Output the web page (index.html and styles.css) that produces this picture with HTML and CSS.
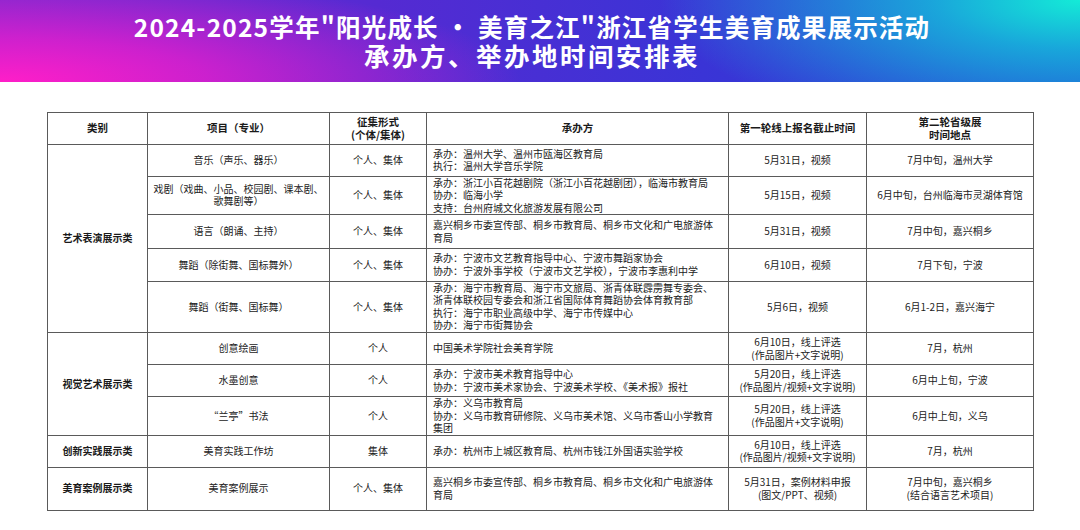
FILE: index.html
```html
<!DOCTYPE html>
<html lang="zh-CN">
<head>
<meta charset="utf-8">
<title>承办方、举办地时间安排表</title>
<link rel="stylesheet" href="styles.css">
</head>
<body>
<header class="banner">
  <h1 class="title"><span class="line line-a">2024-2025学年"阳光成长 · 美育之江"浙江省学生美育成果展示活动</span><span class="line line-b">承办方、举办地时间安排表</span></h1>
</header>
<main class="wrap">
<table class="plan">
  <colgroup>
    <col class="c1"><col class="c2"><col class="c3"><col class="c4"><col class="c5"><col class="c6">
  </colgroup>
  <thead>
    <tr class="h-head">
      <th>类别</th>
      <th>项目（专业）</th>
      <th>征集形式<br>(个体/集体)</th>
      <th>承办方</th>
      <th>第一轮线上报名截止时间</th>
      <th>第二轮省级展<br>时间地点</th>
    </tr>
  </thead>
  <tbody>
    <tr class="h-r1">
      <td class="cat" rowspan="5">艺术表演展示类</td>
      <td>音乐（声乐、器乐）</td>
      <td>个人、集体</td>
      <td class="org">承办：温州大学、温州市瓯海区教育局<br>执行：温州大学音乐学院</td>
      <td>5月31日，视频</td>
      <td>7月中旬，温州大学</td>
    </tr>
    <tr class="h-r2">
      <td>戏剧（戏曲、小品、校园剧、课本剧、<br>歌舞剧等）</td>
      <td>个人、集体</td>
      <td class="org">承办：浙江小百花越剧院（浙江小百花越剧团），临海市教育局<br>协办：临海小学<br>支持：台州府城文化旅游发展有限公司</td>
      <td>5月15日，视频</td>
      <td>6月中旬，台州临海市灵湖体育馆</td>
    </tr>
    <tr class="h-r3">
      <td>语言（朗诵、主持）</td>
      <td>个人、集体</td>
      <td class="org">嘉兴桐乡市委宣传部、桐乡市教育局、桐乡市文化和广电旅游体<br>育局</td>
      <td>5月31日，视频</td>
      <td>7月中旬，嘉兴桐乡</td>
    </tr>
    <tr class="h-r4">
      <td>舞蹈（除街舞、国标舞外）</td>
      <td>个人、集体</td>
      <td class="org">承办：宁波市文艺教育指导中心、宁波市舞蹈家协会<br>协办：宁波外事学校（宁波市文艺学校），宁波市李惠利中学</td>
      <td>6月10日，视频</td>
      <td>7月下旬，宁波</td>
    </tr>
    <tr class="h-r5">
      <td>舞蹈（街舞、国标舞）</td>
      <td>个人、集体</td>
      <td class="org">承办：海宁市教育局、海宁市文旅局、浙青体联霹雳舞专委会、<br>浙青体联校园专委会和浙江省国际体育舞蹈协会体育教育部<br>执行：海宁市职业高级中学、海宁市传媒中心<br>协办：海宁市街舞协会</td>
      <td>5月6日，视频</td>
      <td>6月1-2日，嘉兴海宁</td>
    </tr>
    <tr class="h-r6">
      <td class="cat" rowspan="3">视觉艺术展示类</td>
      <td>创意绘画</td>
      <td>个人</td>
      <td class="org">中国美术学院社会美育学院</td>
      <td>6月10日，线上评选<br>(作品图片+文字说明)</td>
      <td>7月，杭州</td>
    </tr>
    <tr class="h-r7">
      <td>水墨创意</td>
      <td>个人</td>
      <td class="org">承办：宁波市美术教育指导中心<br>协办：宁波市美术家协会、宁波美术学校、《美术报》报社</td>
      <td>5月20日，线上评选<br>(作品图片/视频+文字说明)</td>
      <td>6月中上旬，宁波</td>
    </tr>
    <tr class="h-r8">
      <td>“兰亭”书法</td>
      <td>个人</td>
      <td class="org">承办：义乌市教育局<br>协办：义乌市教育研修院、义乌市美术馆、义乌市香山小学教育<br>集团</td>
      <td>5月20日，线上评选<br>(作品图片+文字说明)</td>
      <td>6月中上旬，义乌</td>
    </tr>
    <tr class="h-r9">
      <td class="cat">创新实践展示类</td>
      <td>美育实践工作坊</td>
      <td>集体</td>
      <td class="org">承办：杭州市上城区教育局、杭州市钱江外国语实验学校</td>
      <td>6月10日，线上评选<br>(作品图片/视频+文字说明)</td>
      <td>7月，杭州</td>
    </tr>
    <tr class="h-r10">
      <td class="cat">美育案例展示类</td>
      <td>美育案例展示</td>
      <td>个人、集体</td>
      <td class="org">嘉兴桐乡市委宣传部、桐乡市教育局、桐乡市文化和广电旅游体<br>育局</td>
      <td>5月31日，案例材料申报<br>(图文/PPT、视频)</td>
      <td>7月中旬，嘉兴桐乡<br>(结合语言艺术项目)</td>
    </tr>
  </tbody>
</table>
</main>
</body>
</html>
```

FILE: styles.css
```css
html, body {
  margin: 0;
  padding: 0;
  background: #ffffff;
}
body {
  width: 1080px;
  height: 530px;
  overflow: hidden;
  font-family: "Noto Sans CJK SC", "Noto Sans", "Liberation Sans", sans-serif;
  color: #222222;
}
.banner {
  height: 82px;
  box-sizing: border-box;
  padding-top: 13px;
  padding-right: 16px;
  background:
    radial-gradient(ellipse 420px 140px at 100% 0%, rgba(20, 235, 215, 1) 0%, rgba(20, 200, 220, 0.75) 35%, rgba(30, 120, 220, 0) 100%),
    radial-gradient(ellipse 520px 110px at 0% 100%, rgba(255, 30, 200, 1) 0%, rgba(230, 30, 205, 0.8) 40%, rgba(150, 30, 210, 0) 100%),
    linear-gradient(90deg, #6e2ad0 0%, #552ad2 35%, #3a34d6 65%, #2444d6 100%);
}
.title {
  margin: 0;
  font-weight: 700;
  color: #ffffff;
  text-align: center;
}
.line {
  display: block;
  height: 28px;
  line-height: 28px;
}
.line-a {
  font-size: 24.5px;
  letter-spacing: 1.2px;
}
.line-b {
  font-size: 25.5px;
  letter-spacing: 2.5px;
}
.wrap {
  padding: 30px 0 0 47px;
}
.plan {
  width: 986px;
  table-layout: fixed;
  border-collapse: collapse;
  font-size: 10px;
  line-height: 12.5px;
}
.c1 { width: 100px; }
.c2 { width: 182px; }
.c3 { width: 97px; }
.c4 { width: 302px; }
.c5 { width: 138px; }
.c6 { width: 167px; }
.plan th,
.plan td {
  border: 1px solid #5a5a5a;
  padding: 0 2px;
  text-align: center;
  vertical-align: middle;
  white-space: nowrap;
}
.plan th {
  font-weight: 700;
  color: #1a1a1a;
  font-size: 10.5px;
}
.plan td.cat {
  font-weight: 700;
  color: #1a1a1a;
}
.plan td.org {
  text-align: left;
  padding-left: 6px;
}
.h-head { height: 32px; }
.h-r1 { height: 31.5px; }
.h-r2 { height: 36.5px; }
.h-r3 { height: 34px; }
.h-r4 { height: 32.5px; }
.h-r5 { height: 51.5px; }
.h-r6 { height: 32px; }
.h-r7 { height: 32px; }
.h-r8 { height: 38px; }
.h-r9 { height: 32px; }
.h-r10 { height: 43px; }
```
